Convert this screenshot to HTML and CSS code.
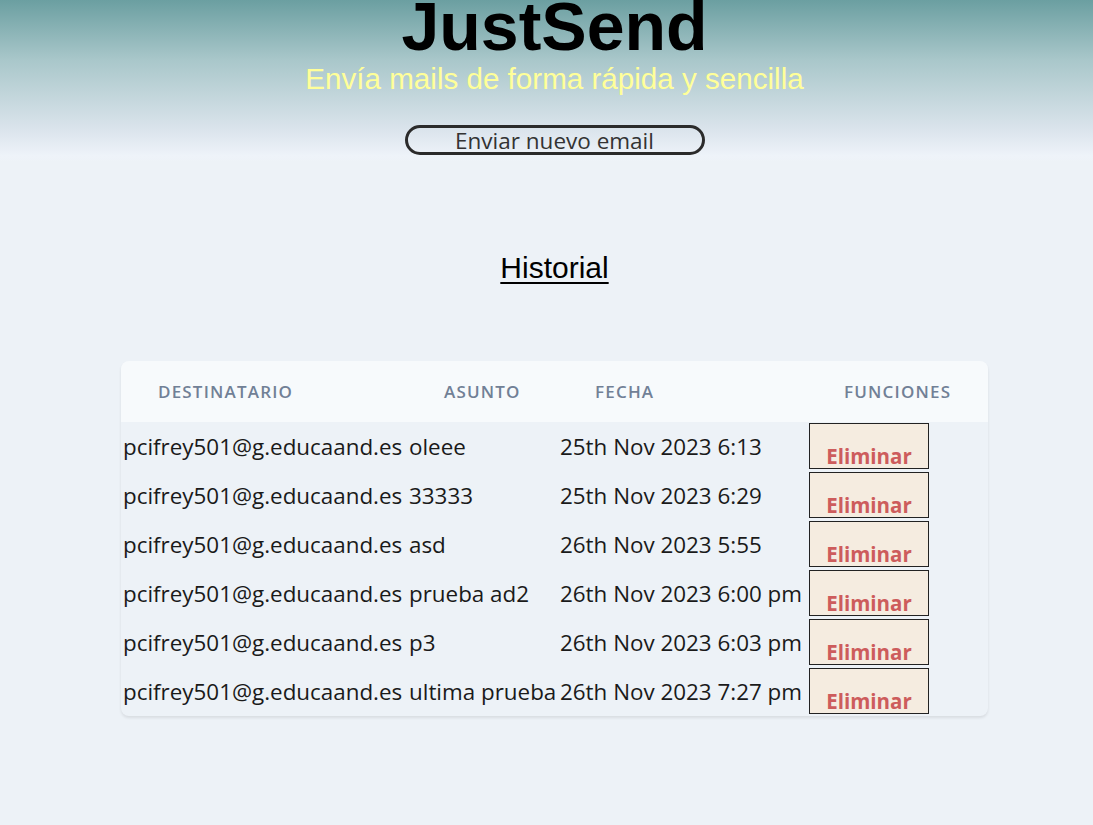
FILE: index.html
```html
<!DOCTYPE html>
<html lang="es">
<head>
<meta charset="utf-8">
<title>JustSend</title>
<link rel="stylesheet" href="styles.css">
</head>
<body>
<div class="page">
  <header class="hero">
    <h1 class="brand">JustSend</h1>
    <p class="tagline">Envía mails de forma rápida y sencilla</p>
    <button class="new-email" type="button">Enviar nuevo email</button>
  </header>
  <main class="content">
    <h2 class="history-title">Historial</h2>
    <table class="history">
      <colgroup>
        <col class="c-to"><col class="c-subject"><col class="c-date"><col class="c-actions">
      </colgroup>
      <thead>
        <tr><th>Destinatario</th><th>Asunto</th><th>Fecha</th><th>Funciones</th></tr>
      </thead>
      <tbody>
        <tr><td>pcifrey501@g.educaand.es</td><td>oleee</td><td>25th Nov 2023 6:13</td><td><button class="delete" type="button">Eliminar</button></td></tr>
        <tr><td>pcifrey501@g.educaand.es</td><td>33333</td><td>25th Nov 2023 6:29</td><td><button class="delete" type="button">Eliminar</button></td></tr>
        <tr><td>pcifrey501@g.educaand.es</td><td>asd</td><td>26th Nov 2023 5:55</td><td><button class="delete" type="button">Eliminar</button></td></tr>
        <tr><td>pcifrey501@g.educaand.es</td><td>prueba ad2</td><td>26th Nov 2023 6:00 pm</td><td><button class="delete" type="button">Eliminar</button></td></tr>
        <tr><td>pcifrey501@g.educaand.es</td><td>p3</td><td>26th Nov 2023 6:03 pm</td><td><button class="delete" type="button">Eliminar</button></td></tr>
        <tr><td>pcifrey501@g.educaand.es</td><td>ultima prueba</td><td>26th Nov 2023 7:27 pm</td><td><button class="delete" type="button">Eliminar</button></td></tr>
      </tbody>
    </table>
  </main>
</div>
</body>
</html>
```

FILE: styles.css
```css
html, body {
  margin: 0;
  padding: 0;
}

body {
  min-height: 825px;
  background: linear-gradient(to bottom, #6b9fa1 0px, #a9c7ca 60px, #dbe4ec 130px, #eef3f9 156px, #edf2f7 162px, #edf2f7 100%) no-repeat;
  background-color: #edf2f7;
  font-family: "Open Sans", "Liberation Sans", sans-serif;
}

.page {
  padding-left: 16px;
  text-align: center;
}

.hero {
  display: flex;
  flex-direction: column;
  align-items: center;
}

.brand {
  margin: 0;
  font-family: "Liberation Sans", Arial, sans-serif;
  font-weight: bold;
  font-size: 68px;
  line-height: 52px;
  color: #000;
}

.tagline {
  margin: 10px 0 0;
  font-family: "Liberation Sans", Arial, sans-serif;
  font-size: 29.6px;
  line-height: 34px;
  color: #ffff99;
}

.new-email {
  margin-top: 29px;
  width: 300px;
  height: 30px;
  box-sizing: border-box;
  padding: 0;
  border: 3px solid #2b2b2b;
  border-radius: 15px;
  background: transparent;
  font-family: "Open Sans", sans-serif;
  font-size: 22.5px;
  line-height: 26px;
  color: #333;
}

.history-title {
  margin: 96px 0 0;
  font-family: "Liberation Sans", Arial, sans-serif;
  font-weight: normal;
  font-size: 30px;
  line-height: 34px;
  text-decoration: underline;
  text-underline-offset: 4px;
  text-decoration-thickness: 2px;
  color: #000;
}

.history {
  margin: 76px auto 0;
  width: 867px;
  table-layout: fixed;
  border-collapse: separate;
  border-spacing: 0;
  border-radius: 8px;
  overflow: hidden;
  box-shadow: 0 2px 3px rgba(0, 0, 0, 0.09);
  text-align: left;
}

.c-to { width: 286px; }
.c-subject { width: 151px; }
.c-date { width: 249px; }
.c-actions { width: 181px; }

.history thead tr {
  background: #f7fafc;
}

.history th {
  height: 61px;
  padding: 0 0 0 37px;
  font-size: 17px;
  font-weight: 600;
  letter-spacing: 0.07em;
  text-transform: uppercase;
  color: #718096;
  vertical-align: middle;
  white-space: nowrap;
}

.history td {
  height: 46px;
  padding: 1px 0 2px 2px;
  font-size: 22.4px;
  color: #1a1a1a;
  vertical-align: middle;
  white-space: nowrap;
}

.delete {
  display: block;
  width: 120px;
  height: 46px;
  box-sizing: border-box;
  padding: 22px 0 2px;
  border: 1px solid #222;
  border-radius: 0;
  background: #f5ece0;
  font-family: "Open Sans", sans-serif;
  font-weight: bold;
  font-size: 20.5px;
  line-height: 20px;
  color: #cd5c5c;
  text-align: center;
}
```
